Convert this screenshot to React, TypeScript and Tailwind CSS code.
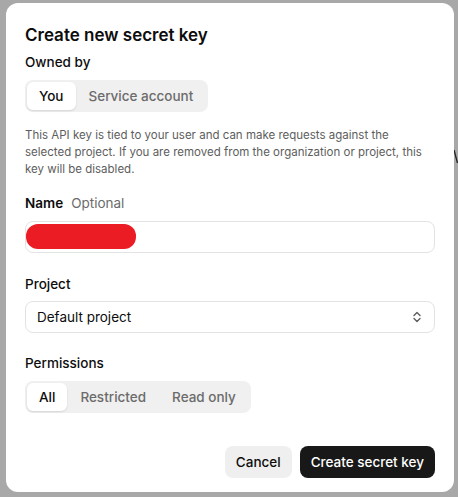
import React from "react";

function Segmented({ items, active }: { items: string[]; active: number }) {
  return (
    <div className="inline-flex items-center rounded-[8px] bg-[#f0f0f0] p-[2px] h-[32px]">
      {items.map((it, i) => (
        <div
          key={it}
          className={
            i === active
              ? "h-[28px] px-[12px] flex items-center rounded-[6px] bg-white text-[#0d0d0d] shadow-[0_1px_2px_rgba(0,0,0,0.12)]"
              : "h-[28px] px-[13px] flex items-center text-[#6b6b6b]"
          }
        >
          <span className="text-[13.5px] font-medium">{it}</span>
        </div>
      ))}
    </div>
  );
}

export default function App() {
  return (
    <div
      className="w-[458px] h-[497px] bg-[#a8a8a8] pt-[3px] pl-[6px] pr-[4px] pb-[5px] relative overflow-hidden"
      style={{ fontFamily: "Inter, 'Noto Sans', sans-serif" }}
    >
      <div className="w-full h-full bg-white rounded-[12px] px-[19px] pt-[19px] flex flex-col">
        <div className="text-[17px] font-semibold text-[#0d0d0d] leading-[26px]">Create new secret key</div>
        <div className="mt-[4px] text-[13.5px] font-medium text-[#0d0d0d] leading-[20px]">Owned by</div>
        <div className="mt-[8px]">
          <Segmented items={["You", "Service account"]} active={0} />
        </div>
        <p className="mt-[15px] text-[11.5px] leading-[17px] text-[#5d5d5d] pr-[10px]">
          This API key is tied to your user and can make requests against the selected project. If you are removed from the organization or project, this key will be disabled.
        </p>
        <div className="mt-[15px] text-[13.5px] leading-[20px] flex gap-[8px]">
          <span className="font-semibold text-[#0d0d0d]">Name</span>
          <span className="text-[#6b6b6b]">Optional</span>
        </div>
        <div className="mt-[8px] h-[32px] rounded-[8px] border border-[#e3e3e3] relative">
          <div className="absolute left-[0px] top-[2px] w-[110px] h-[25px] rounded-[12px] bg-[#ec1c24]" />
        </div>
        <div className="mt-[21px] text-[13.5px] font-medium text-[#0d0d0d] leading-[20px]">Project</div>
        <div className="mt-[7px] h-[32px] rounded-[8px] border border-[#e3e3e3] flex items-center justify-between px-[11px]">
          <span className="text-[13.5px] text-[#0d0d0d]">Default project</span>
          <svg width="12" height="14" viewBox="0 0 12 14" fill="none" stroke="#5d5d5d" strokeWidth="1.4" strokeLinecap="round" strokeLinejoin="round">
            <path d="M3 5.5 L6 2.5 L9 5.5" />
            <path d="M3 8.5 L6 11.5 L9 8.5" />
          </svg>
        </div>
        <div className="mt-[20px] text-[13.5px] font-medium text-[#0d0d0d] leading-[20px]">Permissions</div>
        <div className="mt-[8px]">
          <Segmented items={["All", "Restricted", "Read only"]} active={0} />
        </div>
        <div className="mt-[33px] flex justify-end gap-[8px]">
          <button className="h-[32px] px-[11px] rounded-[8px] bg-[#efefef] text-[13.5px] font-medium text-[#0d0d0d]">Cancel</button>
          <button className="h-[32px] px-[11px] rounded-[8px] bg-[#181818] text-[13.5px] font-medium text-white">Create secret key</button>
        </div>
      </div>
      <svg className="absolute right-0 top-[148px]" width="4" height="16" viewBox="0 0 4 16">
        <path d="M0 2 L3.5 15" stroke="#222" strokeWidth="1.3" fill="none" />
      </svg>
    </div>
  );
}
